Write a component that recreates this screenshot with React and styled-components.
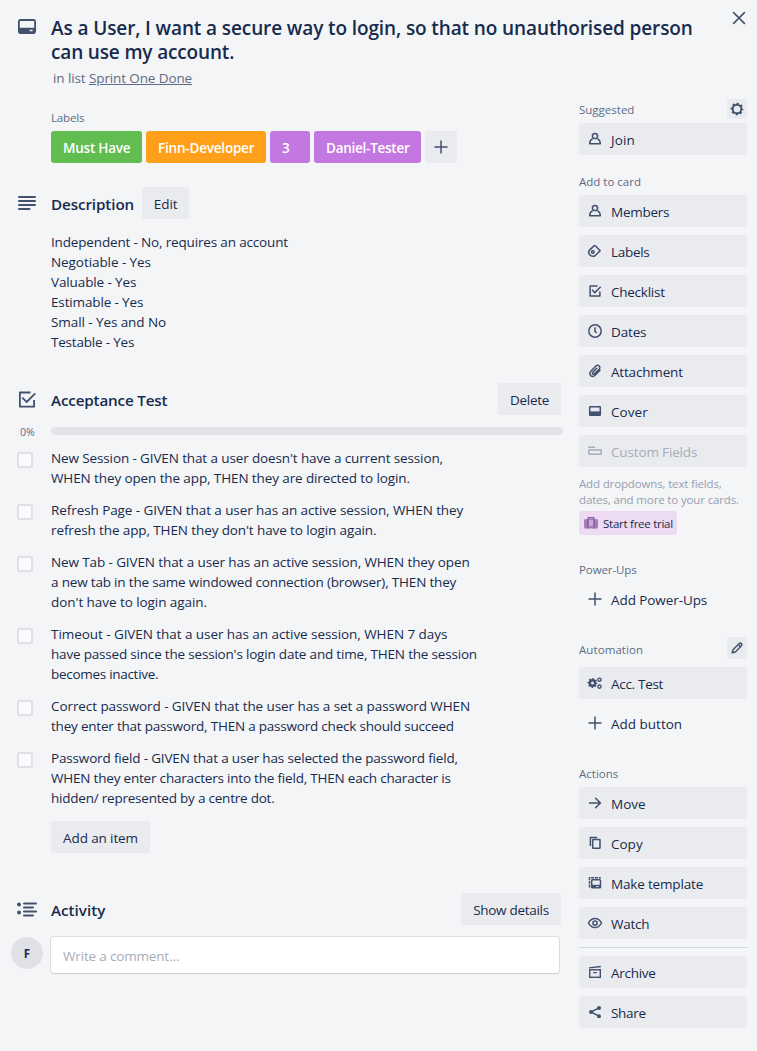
import React from "react";
import styled, { createGlobalStyle } from "styled-components";

const Global = createGlobalStyle`
  *, *::before, *::after { box-sizing: border-box; }
  body {
    margin: 0;
    background: #f4f5f7;
    color: #172b4d;
    font: 400 13.5px/20px "Open Sans", "Noto Sans", sans-serif;
  }
  h2, h3, p { margin: 0; }
  button { font: inherit; color: inherit; border: 0; margin: 0; padding: 0; }
`;

const Card = styled.div`
  position: relative;
  width: 757px;
  height: 1051px;
  overflow: hidden;
  background: #f4f5f7;
`;

const CloseButton = styled.button`
  position: absolute;
  top: 9px;
  right: 9px;
  background: none;
`;

const Svg = styled.svg`
  display: block;
  flex: none;
  width: ${(p) => p.$size || 16}px;
  height: ${(p) => p.$size || 16}px;
  fill: none;
  stroke: currentColor;
  stroke-width: ${(p) => p.$stroke || 1.5};
  color: ${(p) => p.$color || "#42526e"};
`;

const T = styled.span`
  letter-spacing: ${(p) => p.$ls || 0}px;
  white-space: nowrap;
`;

const ButtonText = styled(T)`
  padding-top: 2px;
`;

const Header = styled.header`
  display: flex;
  gap: 15px;
  padding: 16px 0 0 17px;
  height: 99px;
`;

const HeaderIcon = styled.div`
  width: 20px;
  padding-top: 1px;
`;

const Title = styled.h2`
  width: 660px;
  font-size: 19px;
  font-weight: 600;
  line-height: 24px;
  margin-left: -1px;
`;

const TitleLine = styled(T)`
  display: block;
  height: 24px;
`;

const InList = styled.p`
  margin: 4px 0 0 1px;
  color: #5e6c84;
  line-height: 20px;
`;

const ListLink = styled(T)`
  text-decoration: underline;
`;

const Columns = styled.div`
  display: flex;
  align-items: flex-start;
`;

const Main = styled.main`
  width: 579px;
  padding: 9px 0 0 51px;
`;

const SmallHeading = styled.h3`
  flex: 1;
  padding-top: ${(p) => p.$drop || 0}px;
  color: #5e6c84;
  font-size: 11.5px;
  font-weight: 500;
  line-height: 20px;
`;

const LabelRow = styled.div`
  display: flex;
  gap: 4px;
  margin-top: 3px;
`;

const Label = styled.span`
  width: ${(p) => p.$w}px;
  height: 32px;
  padding-left: 12px;
  border-radius: 3px;
  background: ${(p) => p.$bg};
  color: #fff;
  font-weight: 600;
  line-height: 34px;
`;

const Button = styled.button`
  width: ${(p) => p.$w}px;
  height: 32px;
  display: flex;
  align-items: center;
  justify-content: center;
  border-radius: 3px;
  background: #eaebef;
`;

const Section = styled.section`
  margin-top: ${(p) => p.$top}px;
`;

const SectionHead = styled.div`
  display: flex;
  align-items: center;
  gap: 8px;
  height: 32px;
  margin-left: -34px;
  padding-right: 18px;
`;

const SectionTitle = styled.h3`
  flex: ${(p) => (p.$grow ? 1 : "none")};
  margin-left: 6px;
  padding-top: 1px;
  font-size: 15.2px;
  font-weight: 600;
  line-height: 24px;
`;

const Description = styled.div`
  margin-top: 13px;
`;

const Line = styled(T)`
  display: block;
  height: 20px;
`;

const Progress = styled.div`
  display: flex;
  align-items: center;
  height: 8px;
  margin: 12px 16px 0 -31px;
  color: #5e6c84;
  font-size: 10.6px;
`;

const ProgressLabel = styled(T)`
  width: 31px;
  padding-top: 1px;
`;

const ProgressBar = styled.div`
  flex: 1;
  height: 8px;
  border-radius: 4px;
  background: #e2e4e9;
`;

const CheckItems = styled.div`
  display: flex;
  flex-direction: column;
  gap: 12px;
  margin: 13px 0 0 -34px;
`;

const CheckItem = styled.div`
  display: flex;
  gap: 18px;
`;

const Checkbox = styled.span`
  width: 16px;
  height: 16px;
  margin-top: 4px;
  border: 2px solid #dfe1e6;
  border-radius: 2px;
  background: #fafbfc;
`;

const AddItem = styled.div`
  margin-top: 13px;
`;

const CommentRow = styled.div`
  display: flex;
  align-items: flex-start;
  gap: 8px;
  margin: 11px 0 0 -40px;
`;

const Avatar = styled.span`
  width: 32px;
  height: 32px;
  margin-top: 1px;
  border-radius: 50%;
  background: #dfe1e6;
  font-size: 11.5px;
  font-weight: 700;
  line-height: 33px;
  text-align: center;
`;

const CommentBox = styled.div`
  width: 508px;
  height: 36px;
  margin-top: 1px;
  padding-left: 12px;
  border-radius: 3px;
  background: #fff;
  box-shadow: 0 1px 2px -1px rgba(9, 30, 66, 0.25), 0 0 0 1px rgba(9, 30, 66, 0.1);
  color: #a5adba;
  line-height: 39px;
`;

const Sidebar = styled.aside`
  width: 168px;
`;

const SideGroup = styled.div`
  display: flex;
  flex-direction: column;
  gap: 8px;
  margin-top: ${(p) => p.$top || 0}px;
`;

const SideHead = styled.div`
  display: flex;
  align-items: center;
  height: 20px;
  margin-bottom: ${(p) => p.$mb ?? -4}px;
`;

const MiniButton = styled.button`
  display: flex;
  align-items: center;
  justify-content: center;
  width: 20px;
  height: ${(p) => p.$h || 20}px;
  margin-top: ${(p) => p.$mt || 0}px;
  border-radius: 3px;
  background: #eaebef;
`;

const SideButton = styled.button`
  display: flex;
  align-items: center;
  gap: 8px;
  width: 168px;
  height: 32px;
  padding-left: 8px;
  border-radius: 3px;
  background: ${(p) => (p.$plain ? "none" : "#eaebef")};
  color: ${(p) => (p.$disabled ? "#a5adba" : "#172b4d")};
`;

const Hint = styled.p`
  margin-top: 1px;
  color: #97a0af;
  font-size: 11.5px;
  line-height: 16px;
`;

const HintLine = styled(T)`
  display: block;
`;

const Trial = styled.button`
  display: flex;
  align-items: center;
  gap: 4px;
  width: 98px;
  height: 24px;
  margin-top: -5px;
  padding-left: 4px;
  border-radius: 3px;
  background: #eddbf4;
  font-size: 11.5px;
`;

const Divider = styled.hr`
  width: 168px;
  height: 1px;
  margin: 0;
  border: 0;
  background: #d6d9de;
`;

const shapes = {
  member: (
    <>
      <circle cx="8" cy="5" r="2.6" />
      <path d="M5.6 7.7C3.600 8.700 2.700 10.300 2.700 12.800h10.600c0-2.500-.9-4.100-2.900-5.100" strokeLinejoin="round" />
    </>
  ),
  label: (
    <>
      <path d="M8.300 2.800 13.200 7.700 8.600 12.300C6.800 13.600 4.200 13.300 2.700 11.800 1.400 10.200 1.500 8 3 6.600L7 2.900Q7.700 2.300 8.300 2.800Z" strokeLinejoin="round" />
      <circle cx="5.800" cy="9" r="1.300" />
    </>
  ),
  check: (
    <>
      <path d="M10.500 3.100H3.100v9.800h9.800V8.600" strokeLinejoin="round" />
      <path d="M5 6.800 7.800 9.600 13.700 3.700" />
    </>
  ),
  clock: (
    <>
      <circle cx="8" cy="8" r="6.200" />
      <path d="M8 4.300v4l1.600 1.800" />
    </>
  ),
  clip: (
    <path d="M13 7.200 8.300 12c-1.400 1.500-3.400 1.700-4.600.6C2.400 11.400 2.600 9.500 4 8l4.700-4.700c1-1 2.500-1.200 3.500-.3 1 1 .8 2.400-.2 3.400L7.600 10.800c-.6.6-1.400.7-1.900.2-.5-.5-.4-1.300.2-1.900L9.700 5.300" strokeLinecap="round" />
  ),
  cover: (
    <>
      <rect x="2.700" y="3.700" width="10.600" height="8.600" rx="0.600" />
      <path d="M2.500 8.400h11v4h-11z" fill="currentColor" stroke="none" />
    </>
  ),
  fields: (
    <>
      <path d="M1 4.200h7" />
      <rect x="1.800" y="6.900" width="12.400" height="4.300" rx="0.500" />
    </>
  ),
  plus: <path d="M8 2v12M2 8h12" strokeLinecap="round" />,
  arrow: <path d="M2.500 8h11M8.600 3.200 13.400 8l-4.800 4.800" strokeLinecap="round" strokeLinejoin="round" />,
  copy: (
    <>
      <rect x="5.700" y="4.500" width="7.300" height="8.800" rx="0.500" />
      <path d="M3.400 11V2.600h6.800" />
    </>
  ),
  template: (
    <>
      <rect x="4.700" y="4.700" width="8.800" height="8" rx="0.800" />
      <path d="M4.500 9.800h9v3.200h-9z" fill="currentColor" stroke="none" />
      <path d="M2.500 12.500V2.700h11.300" strokeDasharray="3 0.800" />
      <path d="M9.200 11.600h2.200" stroke="#eaebef" strokeWidth="1" />
    </>
  ),
  eye: (
    <>
      <path d="M1.500 8C4.600 1.900 11.400 1.900 14.500 8 11.400 14.100 4.600 14.100 1.500 8Z" strokeLinejoin="round" />
      <circle cx="8" cy="8" r="2.100" />
    </>
  ),
  archive: (
    <>
      <rect x="2.700" y="5.800" width="10.600" height="7.500" strokeWidth="1.400" />
      <path d="M2 3.900 13.800 2.500M6.200 8.600h3.600" strokeWidth="1.300" />
    </>
  ),
  share: (
    <>
      <path d="M12 3.900 4 8l8 4.200" />
      <g fill="currentColor" stroke="none">
        <circle cx="12" cy="3.900" r="2" />
        <circle cx="4" cy="8" r="2" />
        <circle cx="12" cy="12.200" r="2" />
      </g>
    </>
  ),
  gear: (
    <>
      <circle cx="8" cy="8" r="4.300" strokeWidth="1.900" />
      <circle cx="8" cy="8" r="5.600" strokeWidth="1.500" strokeDasharray="2.200 2.200" strokeDashoffset="1.100" />
    </>
  ),
  gears: (
    <>
      <circle cx="5.500" cy="8" r="2.700" strokeWidth="2.400" />
      <circle cx="5.500" cy="8" r="4.200" strokeWidth="1.500" strokeDasharray="1.650 1.650" strokeDashoffset="0.800" />
      <circle cx="12.500" cy="4.700" r="1.600" strokeWidth="1.400" />
      <circle cx="12.500" cy="11.600" r="1.600" strokeWidth="1.400" />
    </>
  ),
  pencil: (
    <path d="M3.200 12.800 4 9.700 10.200 3.500c1.400-1.300 3.600.9 2.300 2.300L6.300 12zM9.300 4.500 11.500 6.700" strokeLinejoin="round" />
  ),
  close: <path d="M2.800 2.800 13.200 13.200M13.200 2.800 2.800 13.200" />,
};

const Icon = ({ name, ...rest }) => (
  <Svg viewBox="0 0 16 16" {...rest}>
    {shapes[name]}
  </Svg>
);

const CardIcon = () => (
  <Svg viewBox="0 0 20 20" $size={20}>
    <rect x="1.900" y="3" width="16.200" height="13" rx="1.500" strokeWidth="1.800" />
    <path d="M2 10.800h16v4.700q0 1-1 1H3q-1 0-1-1z" fill="currentColor" stroke="none" />
    <path d="M12.600 13.500h3" stroke="#f4f5f7" strokeWidth="1.400" />
  </Svg>
);

const TextIcon = () => (
  <Svg viewBox="0 0 20 20" $size={20} $stroke={2}>
    <path d="M2 4h16M2 8h16M2 12h16M2 16h10.500" strokeLinecap="round" />
  </Svg>
);

const ChecklistIcon = () => (
  <Svg viewBox="0 0 20 20" $size={20} $stroke={1.8}>
    <path d="M13.500 3.500H2.900v14.200h14.200V11" strokeLinejoin="round" />
    <path d="M5.300 8.600 9.700 13 18.300 4.400" />
  </Svg>
);

const ActivityIcon = () => (
  <Svg viewBox="0 0 20 20" $size={20}>
    <path d="M7 4.500h12M7 8.500h9M7 12.500h12M7 16.500h9" strokeWidth="2" strokeLinecap="round" />
    <g fill="currentColor" stroke="none">
      <circle cx="2" cy="5.500" r="2" />
      <circle cx="2" cy="13.500" r="2" />
    </g>
  </Svg>
);

const CaseIcon = () => (
  <Svg viewBox="0 0 16 16" $color="#89609e">
    <rect x="1" y="4" width="14" height="9.500" rx="1.500" fill="#a57db8" stroke="none" />
    <path d="M4.800 13.500V4.500M11.200 13.500V4.500M5.300 4V2.700h5.400V4" strokeWidth="1.400" />
    <path d="M7 5v6M9 5v6" stroke="#eddbf4" strokeWidth="1" />
  </Svg>
);

const labels = [
  { text: "Must Have", bg: "#61bd4f", w: 91, ls: -0.22 },
  { text: "Finn-Developer", bg: "#ff9f1a", w: 120, ls: -0.2 },
  { text: "3", bg: "#c377e0", w: 40 },
  { text: "Daniel-Tester", bg: "#c377e0", w: 107, ls: -0.26 },
];

const description = [
  ["Independent - No, requires an account", -0.16],
  ["Negotiable - Yes", -0.07],
  ["Valuable - Yes", -0.12],
  ["Estimable - Yes", -0.14],
  ["Small - Yes and No", -0.08],
  ["Testable - Yes", -0.2],
];

const items = [
  [
    ["New Session - GIVEN that a user doesn't have a current session,", -0.12],
    ["WHEN they open the app, THEN they are directed to login.", -0.11],
  ],
  [
    ["Refresh Page - GIVEN that a user has an active session, WHEN they", -0.08],
    ["refresh the app, THEN they don't have to login again.", -0.11],
  ],
  [
    ["New Tab - GIVEN that a user has an active session, WHEN they open", -0.11],
    ["a new tab in the same windowed connection (browser), THEN they", -0.18],
    ["don't have to login again.", -0.06],
  ],
  [
    ["Timeout - GIVEN that a user has an active session, WHEN 7 days", -0.06],
    ["have passed since the session's login date and time, THEN the session", -0.19],
    ["becomes inactive.", -0.29],
  ],
  [
    ["Correct password - GIVEN that the user has a set a password WHEN", -0.08],
    ["they enter that password, THEN a password check should succeed", -0.21],
  ],
  [
    ["Password field - GIVEN that a user has selected the password field,", -0.16],
    ["WHEN they enter characters into the field, THEN each character is", -0.2],
    ["hidden/ represented by a centre dot.", -0.22],
  ],
];

const addToCard = [
  ["member", "Members", -0.25],
  ["label", "Labels", -0.3],
  ["check", "Checklist", -0.25],
  ["clock", "Dates", -0.15],
  ["clip", "Attachment", -0.18],
  ["cover", "Cover", 0.05],
];

const actions = [
  ["arrow", "Move", 0],
  ["copy", "Copy", 0],
  ["template", "Make template", -0.17],
  ["eye", "Watch", -0.25],
];

const SideItem = ({ icon, text, ls, ...rest }) => (
  <SideButton {...rest}>
    <Icon name={icon} $color={rest.$disabled ? "#a5adba" : undefined} />
    <ButtonText $ls={ls}>{text}</ButtonText>
  </SideButton>
);

export default function App() {
  return (
    <>
      <Global />
      <Card>
        <CloseButton aria-label="Close">
          <Icon name="close" $size={18} $stroke={1.4} />
        </CloseButton>
        <Header>
          <HeaderIcon><CardIcon /></HeaderIcon>
          <div>
            <Title>
              <TitleLine $ls={-0.11}>As a User, I want a secure way to login, so that no unauthorised person</TitleLine>
              <TitleLine $ls={-0.16}>can use my account.</TitleLine>
            </Title>
            <InList><T $ls={-0.1}>in list </T><ListLink $ls={-0.12}>Sprint One Done</ListLink></InList>
          </div>
        </Header>
        <Columns>
          <Main>
            <SmallHeading><T $ls={-0.15}>Labels</T></SmallHeading>
            <LabelRow>
              {labels.map((l) => (
                <Label key={l.text} $bg={l.bg} $w={l.w}><T $ls={l.ls}>{l.text}</T></Label>
              ))}
              <Button $w={32} aria-label="Add label"><Icon name="plus" /></Button>
            </LabelRow>
            <Section $top={24}>
              <SectionHead>
                <TextIcon />
                <SectionTitle><T $ls={-0.1}>Description</T></SectionTitle>
                <Button $w={47}><ButtonText $ls={-0.1}>Edit</ButtonText></Button>
              </SectionHead>
              <Description>
                {description.map(([text, ls]) => <Line key={text} $ls={ls}>{text}</Line>)}
              </Description>
            </Section>
            <Section $top={31}>
              <SectionHead>
                <ChecklistIcon />
                <SectionTitle $grow><T $ls={-0.16}>Acceptance Test</T></SectionTitle>
                <Button $w={63}><ButtonText $ls={-0.3}>Delete</ButtonText></Button>
              </SectionHead>
              <Progress>
                <ProgressLabel>0%</ProgressLabel>
                <ProgressBar />
              </Progress>
              <CheckItems>
                {items.map((lines) => (
                  <CheckItem key={lines[0][0]}>
                    <Checkbox />
                    <div>{lines.map(([text, ls]) => <Line key={text} $ls={ls}>{text}</Line>)}</div>
                  </CheckItem>
                ))}
              </CheckItems>
              <AddItem><Button $w={99}><ButtonText $ls={-0.12}>Add an item</ButtonText></Button></AddItem>
            </Section>
            <Section $top={40}>
              <SectionHead>
                <ActivityIcon />
                <SectionTitle $grow><T>Activity</T></SectionTitle>
                <Button $w={100}><ButtonText $ls={-0.3}>Show details</ButtonText></Button>
              </SectionHead>
              <CommentRow>
                <Avatar>F</Avatar>
                <CommentBox><T $ls={-0.17}>Write a comment…</T></CommentBox>
              </CommentRow>
            </Section>
          </Main>
          <Sidebar>
            <SideGroup>
              <SideHead>
                <SmallHeading $drop={1}><T>Suggested</T></SmallHeading>
                <MiniButton aria-label="Settings"><Icon name="gear" /></MiniButton>
              </SideHead>
              <SideItem icon="member" text="Join" ls={0.1} />
            </SideGroup>
            <SideGroup $top={16}>
              <SideHead><SmallHeading $drop={1}><T>Add to card</T></SmallHeading></SideHead>
              {addToCard.map(([icon, text, ls]) => <SideItem key={text} icon={icon} text={text} ls={ls} />)}
              <SideItem icon="fields" text="Custom Fields" ls={-0.15} $disabled />
              <Hint>
                <HintLine $ls={-0.15}>Add dropdowns, text fields,</HintLine>
                <HintLine $ls={-0.14}>dates, and more to your cards.</HintLine>
              </Hint>
              <Trial><CaseIcon /><ButtonText $ls={-0.26}>Start free trial</ButtonText></Trial>
            </SideGroup>
            <SideGroup $top={24}>
              <SideHead><SmallHeading $drop={1}><T $ls={-0.1}>Power-Ups</T></SmallHeading></SideHead>
              <SideItem icon="plus" text="Add Power-Ups" ls={-0.08} $plain />
            </SideGroup>
            <SideGroup $top={24}>
              <SideHead $mb={0}>
                <SmallHeading $drop={1}><T $ls={0.08}>Automation</T></SmallHeading>
                <MiniButton aria-label="Edit automation" $h={22} $mt={-2}><Icon name="pencil" /></MiniButton>
              </SideHead>
              <SideItem icon="gears" text="Acc. Test" ls={-0.3} />
              <SideItem icon="plus" text="Add button" $plain />
            </SideGroup>
            <SideGroup $top={24}>
              <SideHead><SmallHeading $drop={1}><T>Actions</T></SmallHeading></SideHead>
              {actions.map(([icon, text, ls]) => <SideItem key={text} icon={icon} text={text} ls={ls} />)}
              <Divider />
              <SideItem icon="archive" text="Archive" ls={-0.28} />
              <SideItem icon="share" text="Share" ls={-0.3} />
            </SideGroup>
          </Sidebar>
        </Columns>
      </Card>
    </>
  );
}
